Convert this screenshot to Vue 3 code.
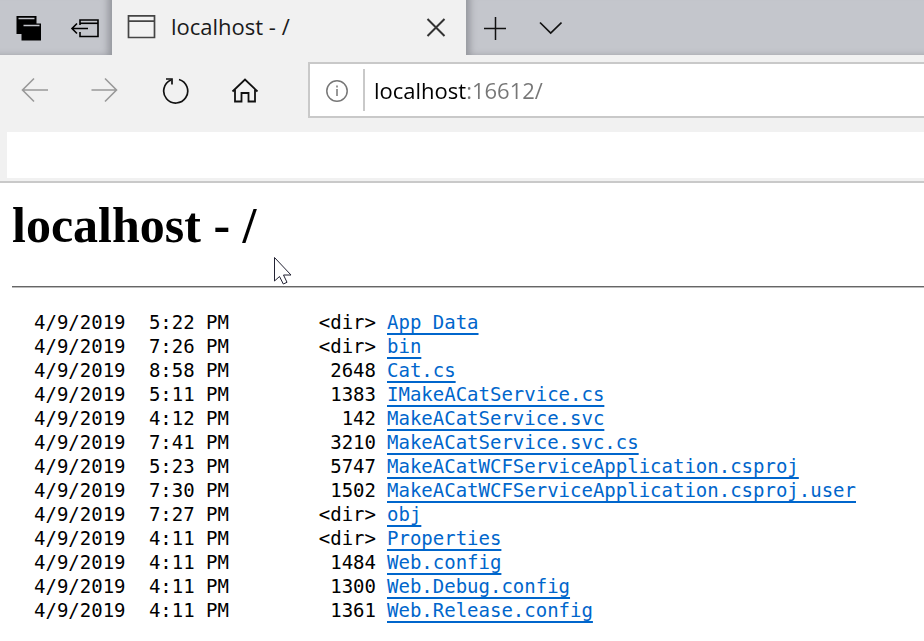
<script setup>
import { ref } from 'vue'

const address = ref('localhost:16612/')

const entries = [
  { date: '4/9/2019', time: '5:22 PM', size: '<dir>', name: 'App_Data' },
  { date: '4/9/2019', time: '7:26 PM', size: '<dir>', name: 'bin' },
  { date: '4/9/2019', time: '8:58 PM', size: '2648', name: 'Cat.cs' },
  { date: '4/9/2019', time: '5:11 PM', size: '1383', name: 'IMakeACatService.cs' },
  { date: '4/9/2019', time: '4:12 PM', size: '142', name: 'MakeACatService.svc' },
  { date: '4/9/2019', time: '7:41 PM', size: '3210', name: 'MakeACatService.svc.cs' },
  { date: '4/9/2019', time: '5:23 PM', size: '5747', name: 'MakeACatWCFServiceApplication.csproj' },
  { date: '4/9/2019', time: '7:30 PM', size: '1502', name: 'MakeACatWCFServiceApplication.csproj.user' },
  { date: '4/9/2019', time: '7:27 PM', size: '<dir>', name: 'obj' },
  { date: '4/9/2019', time: '4:11 PM', size: '<dir>', name: 'Properties' },
  { date: '4/9/2019', time: '4:11 PM', size: '1484', name: 'Web.config' },
  { date: '4/9/2019', time: '4:11 PM', size: '1300', name: 'Web.Debug.config' },
  { date: '4/9/2019', time: '4:11 PM', size: '1361', name: 'Web.Release.config' },
]
</script>

<template>
  <div class="browser">
    <header class="chrome">
      <div class="tab-strip">
        <div class="strip-group strip-left">
          <button class="strip-button" type="button" aria-label="Tabs you've set aside">
            <svg width="28" height="28" viewBox="0 0 28 28">
              <path d="M2.500 2h20v18H2.500z" fill="#000" />
              <path d="M4.500 4.500h16" stroke="#c4c6cc" stroke-width="1.500" />
              <path d="M7.500 9.500h19.500v17h-19.500z" fill="#000" />
              <path d="M9.500 11.500h16" stroke="#c4c6cc" stroke-width="1.500" />
            </svg>
          </button>
          <button class="strip-button" type="button" aria-label="Set these tabs aside">
            <svg width="30" height="28" viewBox="0 0 30 28" fill="none" stroke="#000" stroke-width="1.600">
              <path d="M11 11V6h18v16.500H11V18" />
              <path d="M11 9.300h18" />
              <path d="M3 14.500h16M8 9.500l-5 5 5 5" />
            </svg>
          </button>
        </div>
        <div class="tab">
          <svg width="30" height="26" viewBox="0 0 30 26" fill="none" stroke="#444" stroke-width="1.700">
            <path d="M1.500 0.900h26v21.600h-26zM1.500 6.200h26" />
          </svg>
          <span class="tab-title">localhost - /</span>
          <button class="tab-close" type="button" aria-label="Close tab">
            <svg width="20" height="20" viewBox="0 0 20 20" fill="none" stroke="#333" stroke-width="2">
              <path d="M1.500 1l17 17M18.500 1l-17 17" />
            </svg>
          </button>
        </div>
        <div class="strip-group strip-right">
          <button class="strip-button" type="button" aria-label="New tab">
            <svg width="24" height="24" viewBox="0 0 24 24" fill="none" stroke="#111" stroke-width="1.500">
              <path d="M13.500 1v23M2 12.500h22" />
            </svg>
          </button>
          <button class="strip-button" type="button" aria-label="Show tab previews">
            <svg width="24" height="14" viewBox="0 0 24 14" fill="none" stroke="#111" stroke-width="1.700">
              <path d="M2 1.500l10.700 10.500L23.500 1.500" />
            </svg>
          </button>
        </div>
      </div>

      <div class="toolbar">
        <nav class="nav-buttons" aria-label="Navigation">
          <button class="nav-button" type="button" aria-label="Back" disabled>
            <svg width="28" height="28" viewBox="0 0 28 28" fill="none" stroke="#999" stroke-width="1.600">
              <path d="M1.500 14h25.500M13 2.500L1.500 14 13 25.500" />
            </svg>
          </button>
          <button class="nav-button" type="button" aria-label="Forward" disabled>
            <svg width="28" height="28" viewBox="0 0 28 28" fill="none" stroke="#999" stroke-width="1.600">
              <path d="M0.500 14H26M14 2.500L25.500 14 14 25.500" />
            </svg>
          </button>
          <button class="nav-button" type="button" aria-label="Refresh">
            <svg width="28" height="28" viewBox="0 0 28 28" fill="none" stroke="#111" stroke-width="1.700">
              <path d="M18 3.500A12 12 0 1 1 10 4" />
              <path d="M5 3H11V8.500" />
            </svg>
          </button>
          <button class="nav-button" type="button" aria-label="Home">
            <svg width="28" height="28" viewBox="0 0 28 28" fill="none" stroke="#111" stroke-width="1.800">
              <path d="M1.500 15.500L14 3.500l12.500 12" />
              <path d="M4 13.500v12h6.500V17h7v8.500H24v-12" />
            </svg>
          </button>
        </nav>
        <form class="address-bar" @submit.prevent>
          <button class="site-info" type="button" aria-label="Site information">
            <svg width="24" height="24" viewBox="0 0 24 24" fill="none" stroke="#777" stroke-width="1.500">
              <circle cx="12" cy="13" r="10.200" />
              <path d="M12 11v7M12 7.500v2" />
            </svg>
          </button>
          <input v-model="address" class="address-input" type="text" aria-label="Address" spellcheck="false" />
        </form>
      </div>

      <div class="favorites-bar"></div>
    </header>

    <main class="page">
      <h1>localhost - /</h1>
      <hr />
      <table class="listing">
        <tbody>
          <tr v-for="entry in entries" :key="entry.name">
            <td class="date">{{ entry.date }}</td>
            <td class="time">{{ entry.time }}</td>
            <td class="size">{{ entry.size }}</td>
            <td class="name"><a :href="'/' + entry.name">{{ entry.name }}</a></td>
          </tr>
        </tbody>
      </table>
    </main>

    <svg class="pointer" width="20" height="30" viewBox="0 0 20 30">
      <path d="M0.500 0.500v23.500l5-4.500 3.800 7.500 3.700-1.700-3.500-7.300h7.500z" fill="#fff" stroke="#223" stroke-width="1" />
    </svg>
  </div>
</template>

<style>
body {
  background: #fff;
}
</style>

<style scoped>
.browser {
  position: relative;
  overflow: hidden;
  font-family: "Open Sans", "Noto Sans", sans-serif;
}

button {
  display: flex;
  align-items: center;
  justify-content: center;
  padding: 0;
  border: 0;
  background: none;
}

.chrome {
  background: #f1f1f1;
  border-bottom: 2px solid #c9c9c9;
}

.tab-strip {
  display: flex;
  height: 55px;
  background: #c4c6cc;
}

.strip-group {
  display: flex;
}

.strip-left {
  box-shadow: inset -8px -3px 7px -4px #95979d;
}

.strip-right {
  flex: 1;
  box-shadow: inset 8px -3px 7px -4px #95979d;
}

.strip-button {
  width: 56px;
}

.tab {
  display: flex;
  align-items: center;
  width: 354px;
  box-sizing: border-box;
  padding: 0 20px 0 15px;
  background: #f1f1f1;
}

.tab-title {
  flex: 1;
  padding: 0 0 3px 14px;
  font-size: 22px;
  line-height: 30px;
  color: #1a1a1a;
}

.toolbar {
  display: flex;
  align-items: center;
  height: 70px;
}

.nav-buttons {
  display: flex;
  margin-right: 28px;
}

.nav-button {
  width: 70px;
  height: 56px;
}

.address-bar {
  display: flex;
  align-items: center;
  flex: 1;
  min-width: 0;
  height: 56px;
  box-sizing: border-box;
  border: 2px solid #c9c9c9;
  border-right: 0;
  background: #fff;
}

.site-info {
  width: 55px;
  height: 42px;
  border-right: 2px solid #c9c9c9;
}

.address-input {
  flex: 1;
  min-width: 0;
  height: 42px;
  padding: 0 9px;
  border: 0;
  outline: 0;
  font-family: inherit;
  font-size: 22px;
  color: transparent;
  caret-color: #000;
  /* host in black, port and path in grey */
  background: linear-gradient(90deg, #000 102px, #767676 102px);
  background-clip: text;
  -webkit-background-clip: text;
}

.favorites-bar {
  height: 46px;
  margin: 7px 0 3px 7px;
  background: #fff;
}

.page {
  padding: 12px 0 16px 12px;
}

h1 {
  margin: 0;
  font: bold 50px/60px "Liberation Serif", serif;
  color: #000;
}

hr {
  height: 1px;
  margin: 31px 0 22px;
  border: 0;
  border-bottom: 1px solid #bbb;
  background: #666;
}

.listing {
  border-collapse: collapse;
  margin-left: 22px;
  font: 19px/24px "DejaVu Sans Mono", monospace;
  color: #000;
  white-space: nowrap;
}

td {
  padding: 0;
}

.date {
  width: 92px;
}

.time {
  width: 103px;
  text-align: right;
}

.size {
  width: 147px;
  text-align: right;
}

.name {
  padding-left: 11px;
}

.name a {
  color: #0066cc;
  text-decoration: underline;
  text-decoration-thickness: 2px;
  text-underline-offset: 4px;
  text-decoration-skip-ink: none;
}

.pointer {
  position: absolute;
  left: 274px;
  top: 257px;
}
</style>
